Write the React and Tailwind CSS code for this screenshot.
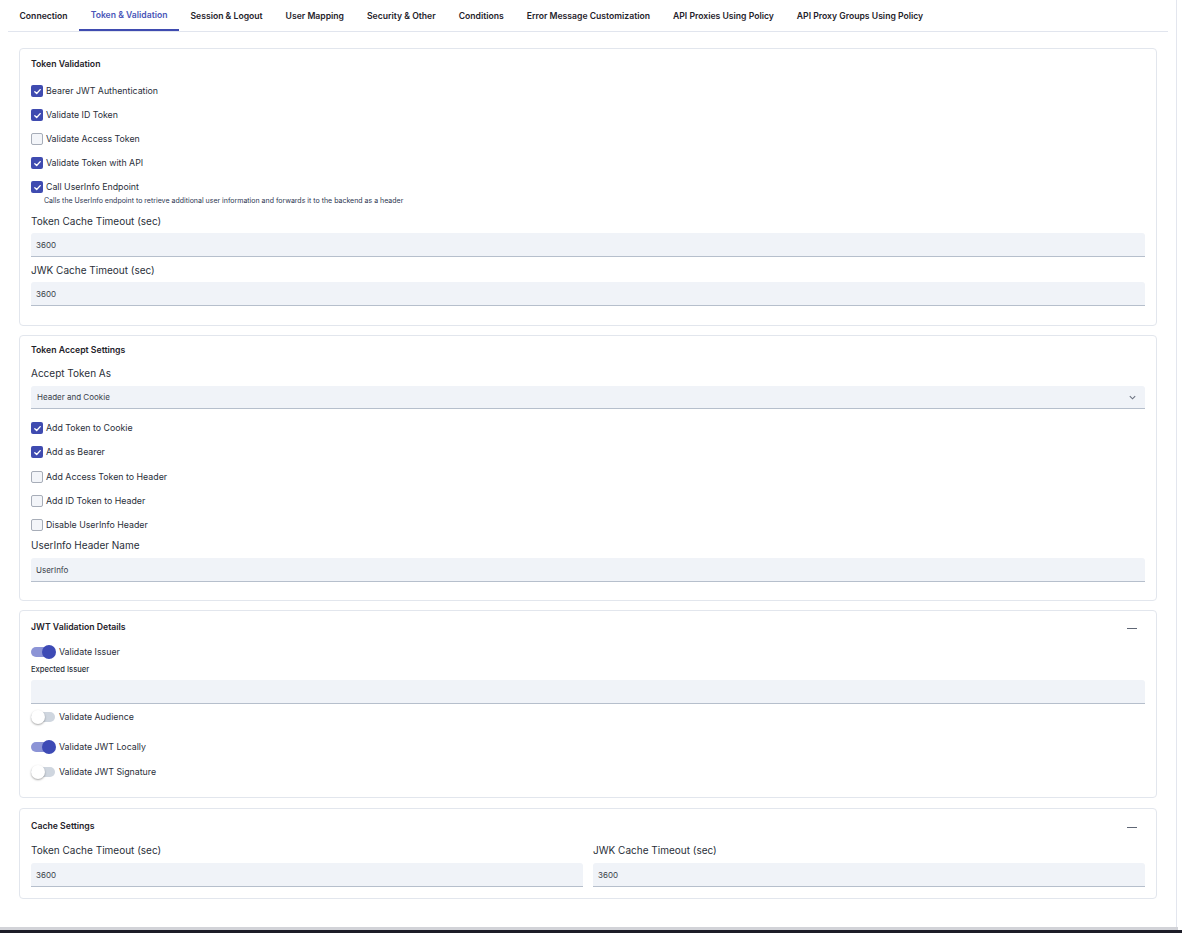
import React from "react";

const tabs = [
  "Connection",
  "Token & Validation",
  "Session & Logout",
  "User Mapping",
  "Security & Other",
  "Conditions",
  "Error Message Customization",
  "API Proxies Using Policy",
  "API Proxy Groups Using Policy",
];

function Check({ checked, label, className = "" }) {
  return (
    <div className={"flex items-center h-[12px] " + className}>
      {checked ? (
        <span className="w-[12px] h-[12px] rounded-[2px] bg-[#3f4bb0] flex items-center justify-center">
          <svg width="9" height="9" viewBox="0 0 10 10">
            <path d="M2 5.2 L4.1 7.2 L8 2.9" fill="none" stroke="white" strokeWidth="1.5" strokeLinecap="round" strokeLinejoin="round" />
          </svg>
        </span>
      ) : (
        <span className="w-[12px] h-[12px] rounded-[2px] border border-[#a7adb8] bg-[#f3f5f9]" />
      )}
      <span className="ml-[3px] text-[8.8px] text-[#2a2f3a]">{label}</span>
    </div>
  );
}

function Toggle({ on, label, className = "" }) {
  return (
    <div className={"flex items-center h-[14px] " + className}>
      <span className="relative w-[25px] h-[14px] flex items-center">
        <span className={"w-[24px] h-[10px] rounded-full " + (on ? "bg-[#8c94d6]" : "bg-[#cfd6df]")} />
        <span
          className={
            "absolute top-0 w-[14px] h-[14px] rounded-full " +
            (on ? "left-[11px] bg-[#3d4ab5]" : "left-0 bg-white shadow-[0_1px_2px_rgba(0,0,0,0.35)]")
          }
        />
      </span>
      <span className="ml-[3px] text-[8.8px] text-[#2a2f3a]">{label}</span>
    </div>
  );
}

function Label({ children, className = "" }) {
  return <div className={"text-[10px] leading-[14px] text-[#2a2f3a] " + className}>{children}</div>;
}

function Input({ value, className = "" }) {
  return (
    <div className={"h-[24px] bg-[#f0f3f8] border-b border-[#b6bfcc] rounded-t-[3px] flex items-center px-[5px] text-[8px] text-[#3a3f4a] " + className}>
      {value}
    </div>
  );
}

function Card({ title, minus, children, className = "" }) {
  return (
    <div className={"border border-[#e2e6ed] rounded-[4px] px-[11px] " + className}>
      <div className="flex items-center justify-between h-[12px]">
        <span className="text-[8.7px] font-semibold text-[#1f232b]">{title}</span>
        {minus && <span className="w-[10px] h-px bg-[#5f6675] mr-[8px]" />}
      </div>
      {children}
    </div>
  );
}

export default function App() {
  return (
    <div className="w-[1182px] h-[933px] bg-white flex flex-col" style={{ fontFamily: "Inter, 'Noto Sans', sans-serif" }}>
      <div className="flex h-[927px]">
        <div className="w-[1177px] border-r border-[#e3e6ee] px-[8px]">
          <div className="flex h-[32px] border-b border-[#e1e5ee]">
            {tabs.map((t, i) => (
              <div
                key={t}
                className={
                  "px-[11.5px] pt-[2px] flex items-center text-[8.65px] font-semibold " +
                  (i === 1 ? "text-[#4a56b8] border-b-2 border-[#3f4bb0]" : "text-[#1f232b]")
                }
              >
                {t}
              </div>
            ))}
          </div>
          <div className="px-[11px] pt-[16px] flex flex-col gap-[9px]">
            <Card title="Token Validation" className="pt-[10px] h-[278px]">
              <div className="mt-[14px] flex flex-col gap-[12px]">
                <Check checked label="Bearer JWT Authentication" />
                <Check checked label="Validate ID Token" />
                <Check label="Validate Access Token" />
                <Check checked label="Validate Token with API" />
                <Check checked label="Call UserInfo Endpoint" />
              </div>
              <div className="ml-[13px] mt-[3px] text-[7px] leading-[10px] text-[#2b3550]">
                Calls the UserInfo endpoint to retrieve additional user information and forwards it to the backend as a header
              </div>
              <Label className="mt-[8px]">Token Cache Timeout (sec)</Label>
              <Input value="3600" className="mt-[5px]" />
              <Label className="mt-[6px]">JWK Cache Timeout (sec)</Label>
              <Input value="3600" className="mt-[5px]" />
            </Card>

            <Card title="Token Accept Settings" className="pt-[9px] h-[266px]">
              <Label className="mt-[9px]">Accept Token As</Label>
              <div className="mt-[6px] h-[23px] bg-[#f0f3f8] border-b border-[#b6bfcc] rounded-t-[3px] flex items-center justify-between pl-[6px] pr-[8px] text-[8px] text-[#3a3f4a]">
                <span>Header and Cookie</span>
                <svg width="9" height="9" viewBox="0 0 10 10">
                  <path d="M2 3.5 L5 6.5 L8 3.5" fill="none" stroke="#6b7280" strokeWidth="1.2" />
                </svg>
              </div>
              <div className="mt-[13px] flex flex-col gap-[12px]">
                <Check checked label="Add Token to Cookie" />
                <Check checked label="Add as Bearer" />
                <Check label="Add Access Token to Header" className="mt-[1px]" />
                <Check label="Add ID Token to Header" />
                <Check label="Disable UserInfo Header" />
              </div>
              <Label className="mt-[7px]">UserInfo Header Name</Label>
              <Input value="UserInfo" className="mt-[6px]" />
            </Card>

            <Card title="JWT Validation Details" minus className="pt-[11px] h-[188px]">
              <Toggle on label="Validate Issuer" className="mt-[11px]" />
              <div className="mt-[6px] text-[7.6px] leading-[10px] font-medium text-[#2a2f3a]">Expected Issuer</div>
              <Input value="" className="mt-[5px] h-[23px]" />
              <Toggle label="Validate Audience" className="mt-[6px]" />
              <Toggle on label="Validate JWT Locally" className="mt-[16px]" />
              <Toggle label="Validate JWT Signature" className="mt-[11px]" />
            </Card>

            <Card title="Cache Settings" minus className="mt-[1px] pt-[12px] h-[91px]">
              <div className="grid grid-cols-2 gap-[10px] mt-[10px]">
                <div>
                  <Label>Token Cache Timeout (sec)</Label>
                  <Input value="3600" className="mt-[6px] h-[23px]" />
                </div>
                <div>
                  <Label>JWK Cache Timeout (sec)</Label>
                  <Input value="3600" className="mt-[6px] h-[23px]" />
                </div>
              </div>
            </Card>
          </div>
        </div>
        <div className="flex-1 bg-white" />
      </div>
      <div className="h-[3px] w-[1178px] bg-[#d2d3d8]" />
      <div className="flex-1 bg-[#1d1d28]" />
    </div>
  );
}
